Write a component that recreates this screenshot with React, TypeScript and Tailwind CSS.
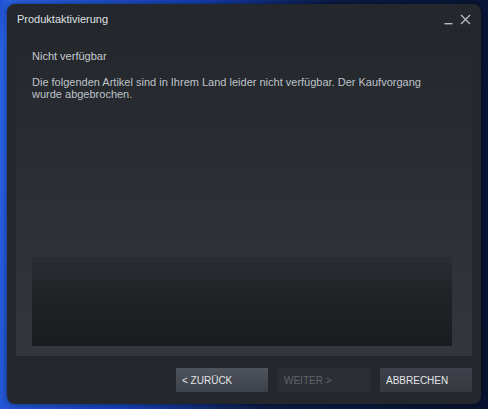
import React from "react";

export default function App() {
  return (
    <div
      className="w-[488px] h-[409px] overflow-hidden pt-[4px] pl-[7px] bg-[linear-gradient(100deg,#1e4fd0_0%,#2a63e8_2%,#1540b5_35%,#0c1c48_60%,#081330_100%)]"
      style={{ fontFamily: '"Liberation Sans", Arial, sans-serif' }}
    >
      <div className="w-[474px] h-[400px] rounded-[8px] bg-[#24272c] flex flex-col shadow-[0_0_6px_rgba(0,0,0,0.5)]">
        {/* title bar */}
        <div className="h-[30px] flex items-center justify-between pl-[10px] pr-[10px]">
          <span className="text-[11px] text-[#dfe1e3] leading-none">Produktaktivierung</span>
          <div className="flex items-end gap-[7px]">
            <svg width="9" height="10" viewBox="0 0 9 10">
              <rect x="0.5" y="8" width="8" height="1.4" fill="#b9bcc0" />
            </svg>
            <svg width="11" height="11" viewBox="0 0 11 11">
              <path d="M1 1 L10 10 M10 1 L1 10" stroke="#b9bcc0" strokeWidth="1.4" />
            </svg>
          </div>
        </div>
        {/* panel */}
        <div className="mx-[9px] mt-[2px] h-[320px] bg-[linear-gradient(180deg,#24272c_0%,#2a2d33_40%,#33363d_100%)] flex flex-col pl-[16px] pr-[20px] pt-[14px] pb-[10px]">
          <div className="text-[11px] text-[#c7cbd0] leading-[13px]">Nicht verfügbar</div>
          <p className="mt-[13px] text-[11px] text-[#bfc3c8] leading-[12px]">
            Die folgenden Artikel sind in Ihrem Land leider nicht verfügbar. Der Kaufvorgang
            <br />
            wurde abgebrochen.
          </p>
          <div className="mt-auto h-[89px] w-[420px] bg-[linear-gradient(180deg,#2a2d32_0%,#202226_45%,#1a1c1f_100%)]" />
        </div>
        {/* buttons */}
        <div className="mt-[12px] mr-[9px] flex justify-end gap-[10px]">
          <div className="w-[92px] h-[24px] flex items-center pl-[6px] text-[10px] text-[#e3e5e8] bg-[linear-gradient(180deg,#4e535c_0%,#3d4149_100%)]">
            &lt; ZURÜCK
          </div>
          <div className="w-[92px] h-[24px] flex items-center pl-[6px] text-[10px] text-[#60646b] bg-[#2b2e34]">
            WEITER &gt;
          </div>
          <div className="w-[92px] h-[24px] flex items-center pl-[6px] text-[10px] text-[#e3e5e8] bg-[linear-gradient(180deg,#3e4149_0%,#363940_100%)]">
            ABBRECHEN
          </div>
        </div>
      </div>
    </div>
  );
}
